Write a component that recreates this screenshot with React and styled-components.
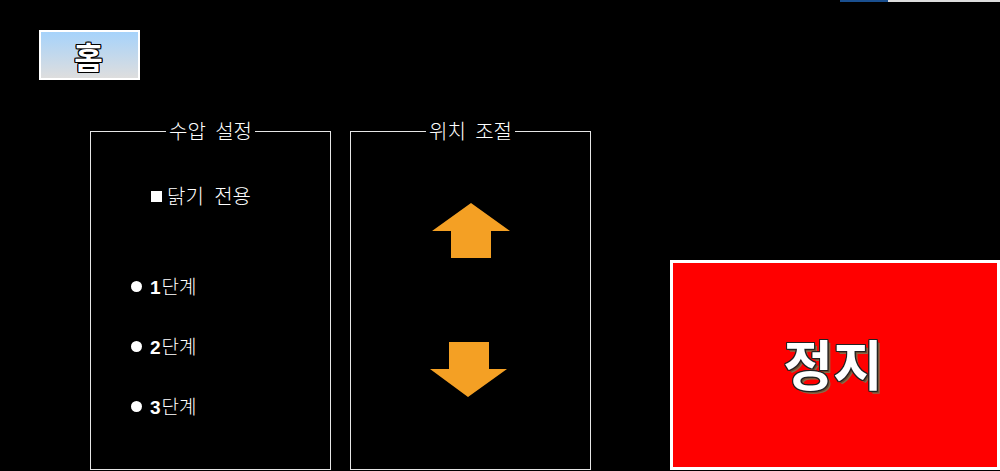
import React from "react";
import styled, { createGlobalStyle } from "styled-components";

const Global = createGlobalStyle`
  html, body { margin: 0; padding: 0; background: #000; }
  body {
    width: 1000px;
    height: 471px;
    overflow: hidden;
    font-family: "Noto Sans CJK KR", "Liberation Sans", sans-serif;
    color: #fff;
  }
`;

const Screen = styled.div`
  width: 1000px;
  height: 471px;
  display: flex;
  flex-direction: column;
  background: #000;
`;

const TopStrip = styled.div`
  height: 2px;
  display: flex;
  justify-content: flex-end;
`;

const StripSegment = styled.div`
  width: ${(p) => p.$w}px;
  background: ${(p) => p.$color};
`;

const HomeButton = styled.button`
  margin: 28px 0 0 39px;
  width: 101px;
  height: 50px;
  box-sizing: border-box;
  border: 2px solid #fff;
  background: linear-gradient(to bottom, #a6d3fb 0%, #c2d8ec 50%, #dedede 100%);
  display: flex;
  align-items: center;
  justify-content: center;
  padding: 0 2px 0 0;
  font-family: "Noto Sans CJK KR", sans-serif;
  font-size: 31px;
  font-weight: 700;
  line-height: 1;
  color: #fff;
  text-shadow:
    -1px -1px 0 #000, 1px -1px 0 #000, -1px 1px 0 #000, 1px 1px 0 #000,
    0 -1px 0 #000, 0 1px 0 #000, -1px 0 0 #000, 1px 0 0 #000;
`;

const MainRow = styled.div`
  margin-top: 41px;
  display: flex;
  align-items: flex-end;
  padding-left: 90px;
`;

const Panel = styled.fieldset`
  margin: 0 ${(p) => p.$gap}px 0 0;
  padding: 0;
  width: 241px;
  height: 349px;
  box-sizing: border-box;
  border: 1px solid #e6e6e6;
  display: flex;
  flex-direction: column;
  align-items: ${(p) => p.$align};
`;

const Legend = styled.legend`
  margin: 0 auto;
  padding: 0 3px;
  font-size: 20px;
  line-height: 20px;
  word-spacing: 5px;
  font-weight: 300;
  color: #fff;
`;

const CheckRow = styled.div`
  margin: 43px 0 0 60px;
  display: flex;
  align-items: center;
  gap: 5px;
  font-size: 20px;
  font-weight: 300;
  line-height: 24px;
  word-spacing: 6px;
`;

const Square = styled.span`
  width: 11px;
  height: 11px;
  background: #fff;
  flex: none;
`;

const RadioList = styled.div`
  margin: 66px 0 0 40px;
  display: flex;
  flex-direction: column;
  gap: 36px;
`;

const RadioRow = styled.div`
  height: 24px;
  display: flex;
  align-items: center;
  gap: 8px;
  font-size: 19px;
  font-weight: 300;
  line-height: 24px;
`;

const Dot = styled.span`
  width: 11px;
  height: 11px;
  border-radius: 50%;
  background: #fff;
  flex: none;
`;

const Num = styled.span`
  font-family: "Liberation Sans", sans-serif;
  font-weight: 700;
  font-size: 19px;
  line-height: 1;
  margin-right: 1px;
`;

const ArrowButton = styled.div`
  margin-top: ${(p) => p.$top}px;
  margin-left: ${(p) => p.$shift}px;
  width: 80px;
  height: 56px;
  display: flex;
  cursor: pointer;
`;

const StopButton = styled.button`
  margin-left: 79px;
  width: 330px;
  height: 210px;
  box-sizing: border-box;
  border: 3px solid #fff;
  background: #ff0000;
  padding: 0 4px 4px 0;
  display: flex;
  align-items: center;
  justify-content: center;
  font-family: "Noto Sans CJK KR", sans-serif;
  font-size: 54px;
  font-weight: 700;
  line-height: 1;
  color: #fff;
  text-shadow:
    -1px -1px 0 #222, 1px -1px 0 #222, -1px 1px 0 #222, 1px 1px 0 #222,
    0 -1px 0 #222, 0 1px 0 #222, -1px 0 0 #222, 1px 0 0 #222,
    2px 2px 0 #6b4a2e, 3px 3px 0 #8a6a4a;
`;

const ORANGE = "#f4a024";

const UpArrow = () => (
  <svg width="80" height="56" viewBox="0 0 80 56">
    <polygon points="40,0 79,28 60,28 60,55 20,55 20,28 1,28" fill={ORANGE} />
  </svg>
);

const DownArrow = () => (
  <svg width="80" height="56" viewBox="0 0 80 56">
    <polygon points="20,0 60,0 60,27 78,27 39,55 1,27 20,27" fill={ORANGE} />
  </svg>
);

export default function App() {
  return (
    <Screen>
      <Global />
      <TopStrip>
        <StripSegment $w={48} $color="#1a4f8f" />
        <StripSegment $w={112} $color="#dcdcdc" />
      </TopStrip>
      <HomeButton>홈</HomeButton>
      <MainRow>
        <Panel $gap={19} $align="flex-start">
          <Legend>수압 설정</Legend>
          <CheckRow>
            <Square />
            <span>닭기 전용</span>
          </CheckRow>
          <RadioList>
            {["1", "2", "3"].map((n) => (
              <RadioRow key={n}>
                <Dot />
                <span>
                  <Num>{n}</Num>단계
                </span>
              </RadioRow>
            ))}
          </RadioList>
        </Panel>
        <Panel $gap={0} $align="center">
          <Legend>위치 조절</Legend>
          <ArrowButton $top={62} $shift={0}>
            <UpArrow />
          </ArrowButton>
          <ArrowButton $top={83} $shift={-3}>
            <DownArrow />
          </ArrowButton>
        </Panel>
        <StopButton>정지</StopButton>
      </MainRow>
    </Screen>
  );
}
